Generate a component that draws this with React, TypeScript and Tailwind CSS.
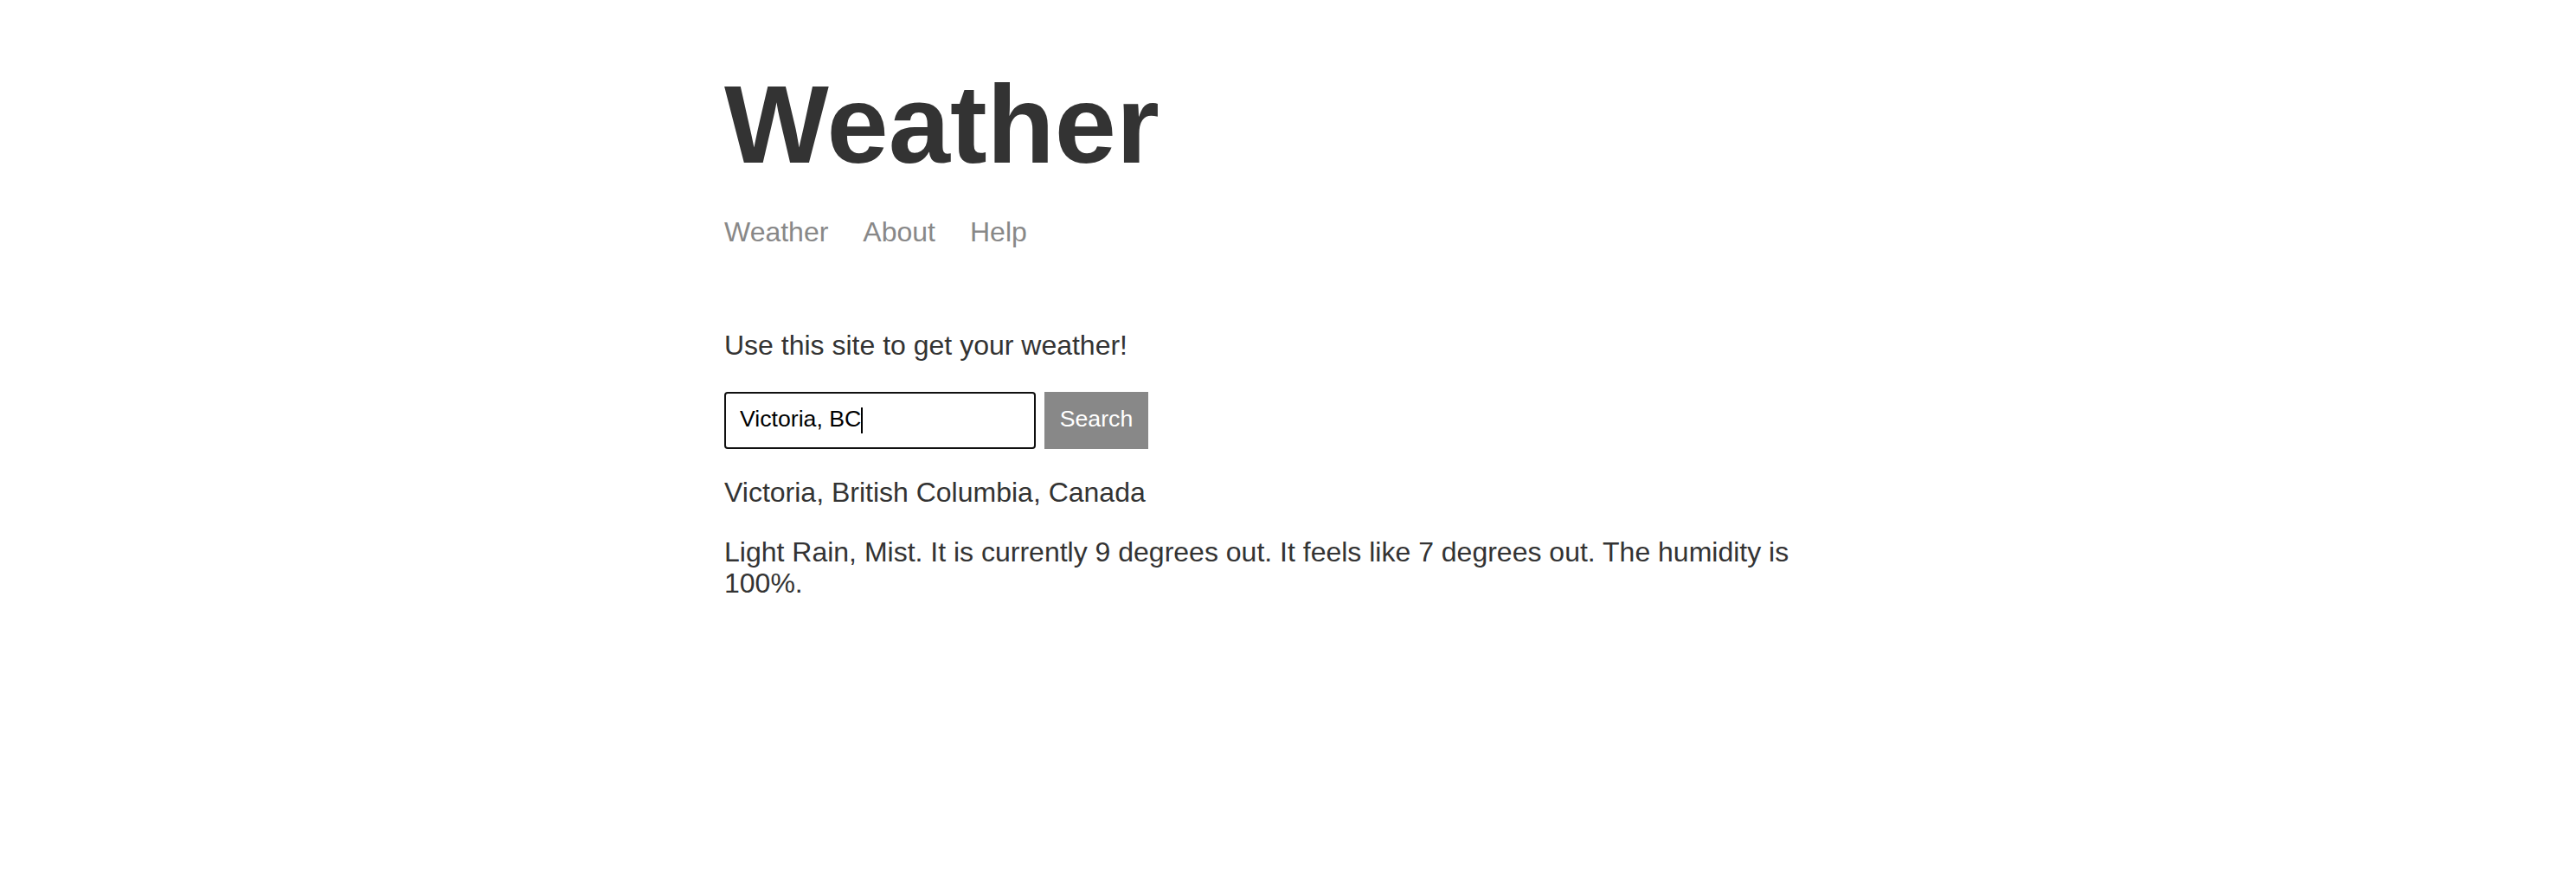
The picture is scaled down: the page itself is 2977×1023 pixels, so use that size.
import { useState } from "react";

const NAV = ["Weather", "About", "Help"];

export default function App() {
  const [location, setLocation] = useState("Victoria, BC");

  return (
    <div className="min-h-screen bg-white text-[#333333] font-['Liberation_Sans',Arial,sans-serif]">
      <div className="mx-auto w-[1303px] pt-[70px]">
        {/* Header */}
        <header>
          <h1 className="text-[128px] leading-[147px] font-bold">Weather</h1>
          <nav className="mt-[33px] flex gap-[40px] text-[32px] leading-[37px] text-[#888888]">
            {NAV.map((item) => (
              <a key={item} href="#" className="no-underline">
                {item}
              </a>
            ))}
          </nav>
        </header>

        {/* Main content */}
        <main>
          <p className="mt-[94px] text-[32px] leading-[37px]">Use this site to get your weather!</p>

          <form className="mt-[35px] flex gap-[10px]" onSubmit={(e) => e.preventDefault()}>
            <div className="relative">
              <input
                autoFocus
                value={location}
                onChange={(e) => setLocation(e.target.value)}
                className="h-[66px] w-[360px] rounded-[4px] border-2 border-[#101010] bg-white pl-[16px] pr-[16px] pb-[4px] text-[26.67px] text-black caret-transparent outline-none"
              />
              {/* text caret at end of value */}
              <div className="pointer-events-none absolute left-[18px] top-[18px] flex h-[30px] items-stretch text-[26.67px] leading-[30px]">
                <span className="invisible whitespace-pre">{location}</span>
                <span className="w-[2px] bg-black" />
              </div>
            </div>
            <button
              type="submit"
              className="flex h-[66px] w-[120px] items-center justify-center bg-[#888888] pb-[4px] text-[26.67px] text-white"
            >
              Search
            </button>
          </form>

          <p className="mt-[32px] text-[32px] leading-[37px]">Victoria, British Columbia, Canada</p>
          <p className="mt-[32px] text-[32px] leading-[36px]">
            Light Rain, Mist. It is currently 9 degrees out. It feels like 7 degrees out. The humidity is 100%.
          </p>
        </main>
      </div>
    </div>
  );
}
